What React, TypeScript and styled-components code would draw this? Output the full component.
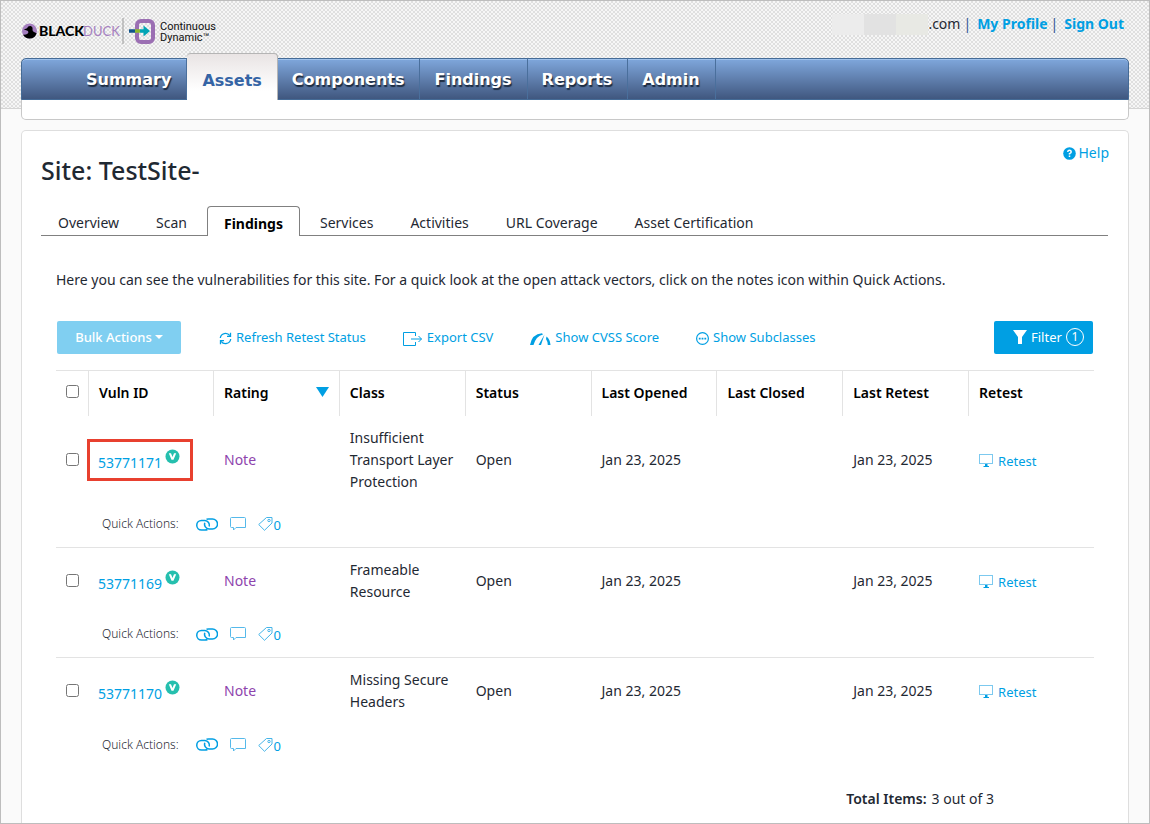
import React from "react";
import styled, { createGlobalStyle, css } from "styled-components";

const BLUE = "#009fe3";
const INK = "#1f2933";

const GlobalStyle = createGlobalStyle`
  *, *::before, *::after { box-sizing: border-box; }
  body {
    margin: 0;
    background: #fafafa;
    color: ${INK};
    font: 14px/22px "Noto Sans", sans-serif;
  }
  a { color: ${BLUE}; text-decoration: none; }
  button { font: inherit; cursor: pointer; }
`;

const Page = styled.div`
  min-height: 100vh;
  display: flex;
  flex-direction: column;
  border: 1px solid #bdbdbd;
  background: #fafafa;
`;

const Header = styled.header`
  padding: 0 20px;
  background-color: #f6f6f6;
  background-image:
    conic-gradient(#dfdfdf 25%, transparent 0 50%, #dfdfdf 0 75%, transparent 0);
  background-size: 4px 4px;
  border-bottom: 1px solid #d4d4d4;
  height: 108px;
`;

const TopBar = styled.div`
  display: flex;
  align-items: flex-start;
  justify-content: space-between;
  height: 57px;
`;

const Brand = styled.a`
  display: flex;
  align-items: center;
  padding-top: 8px;
  height: 52px;
  color: #000;
`;

const Account = styled.div`
  display: flex;
  align-items: center;
  height: 46px;
  padding-right: 5px;
  a { font-weight: 700; }
`;

const Redacted = styled.span`
  width: 96px;
  height: 21px;
  background: linear-gradient(90deg, #ececec 32px, #e2e2e2 32px 64px, #e8e9e4 64px);
`;

const Divider = styled.span`
  margin: 0 6px 0 3px;
  color: #2f5597;
`;

const NavBox = styled.div`
  height: 62px;
  border: 1px solid #c8c8c8;
  border-top: 0;
  border-radius: 5px;
  background: #fff;
`;

const Nav = styled.nav`
  display: flex;
  align-items: flex-end;
  height: 42px;
  margin: 0 -1px;
  padding-left: 50px;
  border: 1px solid #456b96;
  border-radius: 5px 5px 0 0;
  background: linear-gradient(#7fa7dc, #40577f);
  box-shadow: inset 0 1px #9fc2ec;
`;

const NavItem = styled.a<{ $active?: boolean }>`
  display: flex;
  align-items: center;
  height: 40px;
  padding: 2px 15px 0 14px;
  border-right: 1px solid #4a6f9c;
  color: #fff;
  font: 700 16px/22px "DejaVu Sans", Verdana, sans-serif;
  text-shadow: 1px 2px 1px #1c2b40;
  ${(p) =>
    p.$active &&
    css`
      height: 47px;
      margin-bottom: -1px;
      padding: 7px 15px 0;
      border: 1px solid #b5b5b5;
      border-width: 1px 1px 0 0;
      border-radius: 4px 4px 0 0;
      background: linear-gradient(#e9e4e4, #fff 80%);
      color: #3564a5;
      text-shadow: none;
    `}
`;

const Panel = styled.main`
  flex: 1;
  margin: 21px 20px 0;
  padding: 11px 19px 0;
  border: 1px solid #dedede;
  border-bottom: 0;
  border-radius: 5px 5px 0 0;
  background: #fff;
`;

const HelpLink = styled.a`
  display: flex;
  align-items: center;
  gap: 3px;
  margin-left: auto;
  width: max-content;
`;

const Title = styled.h1`
  margin: -10px 0 20px;
  font-size: 25px;
  line-height: 32px;
  font-weight: 500;
`;

const Tabs = styled.nav`
  display: flex;
  height: 30px;
  margin-right: 1px;
  border-bottom: 1px solid #808080;
`;

const Tab = styled.a<{ $active?: boolean }>`
  height: 30px;
  padding: 6px 20px 0 17px;
  color: ${INK};
  ${(p) =>
    p.$active &&
    css`
      margin-right: 3px;
      padding: 6px 16px 0;
      border: 1px solid #808080;
      border-bottom: 0;
      border-radius: 4px 4px 0 0;
      background: #fff;
      color: #000;
      font-weight: 700;
    `}
`;

const Content = styled.section`
  padding: 33px 15px 0;
`;

const Intro = styled.p`
  margin: 0 0 30px;
`;

const Toolbar = styled.div`
  display: flex;
  align-items: center;
  height: 33px;
  margin: 0 1px 16px;
  font-size: 13px;
`;

const BulkButton = styled.button`
  display: flex;
  align-items: center;
  justify-content: center;
  gap: 3px;
  width: 124px;
  height: 33px;
  margin-right: 38px;
  padding: 0 0 2px;
  border: 0;
  border-radius: 2px;
  background: #80cff1;
  color: #fff;
  font-weight: 500;
`;

const ToolLink = styled.a`
  display: flex;
  align-items: center;
  gap: 4px;
  margin-right: 37px;
  padding-bottom: 2px;
  svg { margin-top: 4px; }
`;

const FilterButton = styled.button`
  display: flex;
  align-items: center;
  gap: 4px;
  width: 99px;
  height: 33px;
  margin-left: auto;
  padding: 0 0 1px 19px;
  border: 0;
  border-radius: 2px;
  background: ${BLUE};
  color: #fff;
`;

const Count = styled.span`
  width: 18px;
  height: 18px;
  border: 1px solid #fff;
  border-radius: 50%;
  font-size: 12px;
  line-height: 16px;
`;

const Table = styled.table`
  width: 100%;
  table-layout: fixed;
  border-collapse: separate;
  border-spacing: 0;
`;

const HeadCell = styled.th<{ $width?: number }>`
  width: ${(p) => (p.$width ? `${p.$width}px` : "auto")};
  height: 46px;
  padding: 0 10px 2px;
  border-top: 1px solid #e3e3e3;
  border-left: 1px solid #e3e3e3;
  color: #000;
  font-weight: 600;
  text-align: left;
  &:first-child { padding: 0 0 4px; border-left: 0; }
`;

const HeadLabel = styled.span`
  display: flex;
  align-items: center;
  justify-content: space-between;
  svg { margin-bottom: 2px; }
`;

const Cell = styled.td<{ $check?: boolean }>`
  padding: ${(p) => (p.$check ? "10px 0" : "11px 10px 9px 11px")};
  text-align: ${(p) => (p.$check ? "center" : "left")};
  vertical-align: middle;
`;

const Check = styled.input`
  display: block;
  width: 13px;
  height: 13px;
  margin: 0 auto;
`;

const VulnLink = styled.a<{ $marked?: boolean }>`
  display: flex;
  align-items: center;
  gap: 3px;
  width: 106px;
  height: 42px;
  margin: -10px 0 -10px -12px;
  padding: 5px 0 0 8px;
  border: 3px solid ${(p) => (p.$marked ? "#e8402f" : "transparent")};
  svg { margin-bottom: 12px; }
`;

const Rating = styled.span`
  color: #8e44ad;
`;

const RetestLink = styled.a`
  display: flex;
  align-items: center;
  gap: 4px;
  padding-top: 2px;
  font-size: 13px;
  svg { margin-bottom: 1px; }
`;

const QuickCell = styled.td<{ $last?: boolean }>`
  height: 46px;
  padding: 0 0 1px 46px;
  border-bottom: ${(p) => (p.$last ? "0" : "1px solid #e3e3e3")};
`;

const QuickActions = styled.div`
  display: flex;
  align-items: center;
  font-size: 12px;
  font-weight: 300;
  span { margin-right: 17px; }
  a { display: flex; align-items: center; margin-right: 12px; font-size: 13px; font-weight: 400; }
`;

const TagCount = styled.b`
  padding-top: 2px;
  font-weight: 400;
`;

const Total = styled.p`
  display: flex;
  gap: 5px;
  justify-content: flex-end;
  margin: 20px 100px 10px 0;
  strong { font-weight: 600; }
`;

const Logo = () => (
  <svg width="200" height="32" viewBox="0 0 200 32" aria-label="Black Duck Continuous Dynamic">
    <circle cx="8.500" cy="16" r="7.500" fill="#a57fc0" />
    <path d="M2.800 14.500 6 13.300Q7 10.800 9.500 11 12 11.500 11.500 14.500 11.300 16 13 17L15.600 18.300Q14 23.500 8.500 23.500 4 23.300 2 19.800 5 20 6.500 18.800 8 17.500 7 16 5.500 15 2.800 14.500Z" fill="#000" />
    <text x="18" y="21" fontFamily="Lato" fontWeight="900" fontSize="14" fill="#000">BLACK</text>
    <text x="62" y="21" fontFamily="Lato" fontSize="13" fill="#a57fc0">DUCK</text>
    <path d="M102 3V29" stroke="#999" />
    <rect x="116" y="6" width="16" height="21" rx="4" fill="none" stroke="#9b6fb3" strokeWidth="4" />
    <path d="M108 16H114" stroke="#12558a" strokeWidth="3.500" />
    <path d="M114 16H119" stroke="#8cba2f" strokeWidth="3.500" />
    <path d="M119 14.200h3.500V10.500l6.500 5.500-6.500 5.500v-3.700h-3.500z" fill="#00a5b5" />
    <text x="139" y="15" fontFamily="Roboto" fontSize="11" fill="#111">Continuous</text>
    <text x="139" y="26" fontFamily="Roboto" fontSize="11" fill="#111">Dynamic™</text>
  </svg>
);

const RefreshIcon = () => (
  <svg width="13" height="13" viewBox="0 0 13 13" fill="none" stroke={BLUE} strokeWidth="1.300">
    <path d="M1.300 6A5.200 5.200 0 0 1 10.800 3.700M11.700 7A5.200 5.200 0 0 1 2.200 9.300" />
    <path d="M11.500 .8V4.300H8M1.500 12.200V8.700H5" />
  </svg>
);
const ExportIcon = () => (
  <svg width="20" height="14" viewBox="0 0 20 14" fill="none" stroke={BLUE}>
    <path d="M12.500 4V.5H.5v13h12V10M8 7h10.500M15.500 4l3 3-3 3" />
  </svg>
);
const GaugeIcon = () => (
  <svg width="21" height="12" viewBox="0 0 21 12" fill={BLUE}>
    <path d="M0 12Q2 1 12 .3L13 1.500Q6 3 3.500 12ZM14.500 1.500 11 12H8.500ZM16.500 3.500Q20 6 20.500 12H17.800Q17.500 8 16 6Z" />
  </svg>
);
const SubclassIcon = () => (
  <svg width="13" height="13" viewBox="0 0 13 13">
    <circle cx="6.500" cy="6.500" r="5.900" fill="none" stroke={BLUE} strokeWidth="1.200" />
    <path d="M2.800 5.700h1.800v1.700H2.800zM5.600 5.700h1.800v1.700H5.600zM8.400 5.700h1.800v1.700H8.400z" fill={BLUE} />
  </svg>
);
const HelpIcon = () => (
  <svg width="13" height="13" viewBox="0 0 13 13">
    <circle cx="6.500" cy="6.500" r="6.300" fill={BLUE} />
    <path d="M4.700 5Q4.900 3.300 6.500 3.300T8.200 4.900Q8.200 5.800 6.500 6.600V7.500M6.500 8.600V10" fill="none" stroke="#fff" strokeWidth="1.500" />
  </svg>
);
const FunnelIcon = () => (
  <svg width="14" height="14" viewBox="0 0 14 14"><path d="M0 0H14L9 7V14H5V7Z" fill="#fff" /></svg>
);
const CaretIcon = () => (
  <svg width="8" height="4" viewBox="0 0 8 4"><path d="M0 0H8L4 4Z" fill="#fff" /></svg>
);
const SortIcon = () => (
  <svg width="13" height="10" viewBox="0 0 13 10"><path d="M0 0H13L6.500 10Z" fill={BLUE} /></svg>
);
const VerifiedIcon = () => (
  <svg width="15" height="15" viewBox="0 0 15 15">
    <circle cx="7.500" cy="7.500" r="7" fill="#25bfae" />
    <path d="M3.800 4.200H6L7.500 8 9 4.200H11.200L8.500 10.800H6.500Z" fill="#fff" />
  </svg>
);
const MonitorIcon = () => (
  <svg width="15" height="14" viewBox="0 0 15 14">
    <rect x=".5" y=".5" width="13" height="9" fill="none" stroke="#7cc9ef" />
    <path d="M6 10H8.500V12H10V13H4.500V12H6Z" fill={BLUE} />
  </svg>
);
const LinkIcon = () => (
  <svg width="22" height="13" viewBox="0 0 22 13" fill="none" stroke={BLUE} strokeWidth="1.500">
    <path d="M11.500 11.500Q10.500 12 9 12H5.500A4.700 4.700 0 0 1 5.500 2.500H9A4.700 4.700 0 0 1 13.200 8.500" />
    <path d="M10.500 1.300Q11.500 1 12.500 1H16.500A4.900 4.900 0 0 1 16.500 11H13A4.700 4.700 0 0 1 8.800 4.800" />
  </svg>
);
const CommentIcon = () => (
  <svg width="16" height="14" viewBox="0 0 16 14" fill="none" stroke="#55b9ea">
    <path d="M1.500 .5H14.500Q15.500 .5 15.500 1.500V10.500H6L3.500 13V10.500H1.500Q.5 10.500 .5 9.500V1.500Q.5 .5 1.500 .5Z" />
  </svg>
);
const TagIcon = () => (
  <svg width="16" height="14" viewBox="0 0 16 14" fill="none" stroke="#45b4e8">
    <path d="M8.500 .5H14V6L6.500 13.300.700 7.500Z" /><circle cx="11" cy="3.500" r="1.200" />
  </svg>
);

const navItems = ["Summary", "Assets", "Components", "Findings", "Reports", "Admin"];
const tabs = ["Overview", "Scan", "Findings", "Services", "Activities", "URL Coverage", "Asset Certification"];
const columns = ["Vuln ID", "Rating", "Class", "Status", "Last Opened", "Last Closed", "Last Retest", "Retest"];
const rows = [
  { id: "53771171", cls: "Insufficient Transport Layer Protection", marked: true },
  { id: "53771169", cls: "Frameable Resource" },
  { id: "53771170", cls: "Missing Secure Headers" },
];

export default function App() {
  return (
    <Page>
      <GlobalStyle />
      <Header>
        <TopBar>
          <Brand href="#"><Logo /></Brand>
          <Account>
            <Redacted />.com
            <Divider>|</Divider><a href="#">My Profile</a>
            <Divider>|</Divider><a href="#">Sign Out</a>
          </Account>
        </TopBar>
        <NavBox>
          <Nav>
            {navItems.map((n) => <NavItem key={n} href="#" $active={n === "Assets"}>{n}</NavItem>)}
          </Nav>
        </NavBox>
      </Header>
      <Panel>
        <HelpLink href="#"><HelpIcon />Help</HelpLink>
        <Title>Site: TestSite-</Title>
        <Tabs>
          {tabs.map((t) => <Tab key={t} href="#" $active={t === "Findings"}>{t}</Tab>)}
        </Tabs>
        <Content>
          <Intro>
            Here you can see the vulnerabilities for this site. For a quick look at the open attack vectors, click on the notes icon within Quick Actions.
          </Intro>
          <Toolbar>
            <BulkButton>Bulk Actions <CaretIcon /></BulkButton>
            <ToolLink href="#"><RefreshIcon />Refresh Retest Status</ToolLink>
            <ToolLink href="#"><ExportIcon />Export CSV</ToolLink>
            <ToolLink href="#"><GaugeIcon />Show CVSS Score</ToolLink>
            <ToolLink href="#"><SubclassIcon />Show Subclasses</ToolLink>
            <FilterButton><FunnelIcon />Filter <Count>1</Count></FilterButton>
          </Toolbar>
          <Table>
            <thead>
              <tr>
                <HeadCell $width={32}><Check type="checkbox" aria-label="Select all" /></HeadCell>
                {columns.map((c) => (
                  <HeadCell key={c} $width={c === "Vuln ID" ? 125 : undefined}>
                    <HeadLabel>{c}{c === "Rating" && <SortIcon />}</HeadLabel>
                  </HeadCell>
                ))}
              </tr>
            </thead>
            <tbody>
              {rows.map((r, i) => (
                <React.Fragment key={r.id}>
                  <tr>
                    <Cell $check><Check type="checkbox" aria-label={`Select ${r.id}`} /></Cell>
                    <Cell><VulnLink href="#" $marked={r.marked}>{r.id}<VerifiedIcon /></VulnLink></Cell>
                    <Cell><Rating>Note</Rating></Cell>
                    <Cell>{r.cls}</Cell>
                    <Cell>Open</Cell>
                    <Cell>Jan 23, 2025</Cell>
                    <Cell />
                    <Cell>Jan 23, 2025</Cell>
                    <Cell><RetestLink href="#"><MonitorIcon />Retest</RetestLink></Cell>
                  </tr>
                  <tr>
                    <QuickCell colSpan={9} $last={i === rows.length - 1}>
                      <QuickActions>
                        <span>Quick Actions:</span>
                        <a href="#" aria-label="Link"><LinkIcon /></a>
                        <a href="#" aria-label="Notes"><CommentIcon /></a>
                        <a href="#" aria-label="Tags"><TagIcon /><TagCount>0</TagCount></a>
                      </QuickActions>
                    </QuickCell>
                  </tr>
                </React.Fragment>
              ))}
            </tbody>
          </Table>
          <Total><strong>Total Items:</strong>3 out of 3</Total>
        </Content>
      </Panel>
    </Page>
  );
}
